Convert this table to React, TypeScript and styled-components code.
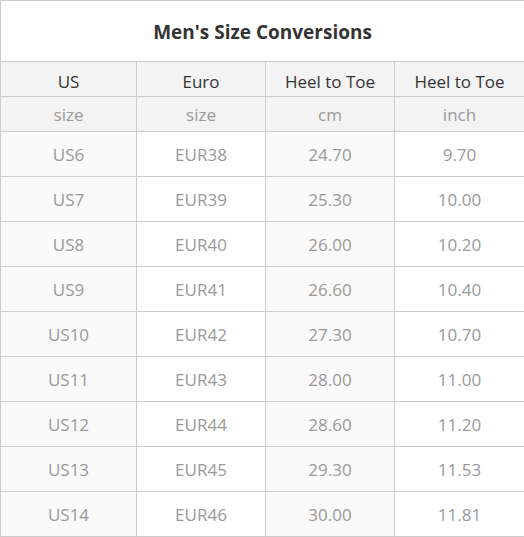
import React from "react";
import styled, { createGlobalStyle } from "styled-components";

const Global = createGlobalStyle`
  html, body { margin: 0; padding: 0; background: #fff; }
  body { font-family: "Open Sans", "Noto Sans", "Liberation Sans", sans-serif; }
`;

const Table = styled.table`
  width: 524px;
  border-collapse: collapse;
  table-layout: fixed;
  border: 1px solid #cccccc;
`;

const Col = styled.col<{ $w: number }>`
  width: ${(p) => p.$w}px;
`;

const TitleCell = styled.th`
  height: 58px;
  padding: 2px 0 0;
  border: 1px solid #cccccc;
  background: #ffffff;
  color: #333333;
  font-size: 19px;
  font-weight: 700;
  text-align: center;
  vertical-align: middle;
`;

const HeadCell = styled.th<{ $sub?: boolean }>`
  height: ${(p) => (p.$sub ? "34px" : "30px")};
  padding: ${(p) => (p.$sub ? "0" : "4px 0 0")};
  border: 1px solid #cccccc;
  background: #f3f3f3;
  color: ${(p) => (p.$sub ? "#9a9a9a" : "#333333")};
  font-size: 17px;
  font-weight: 400;
  text-align: center;
  vertical-align: middle;
  white-space: nowrap;
`;

const Cell = styled.td<{ $shade: boolean }>`
  height: 43px;
  padding: 1px 0 0;
  border: 1px solid #cccccc;
  background: ${(p) => (p.$shade ? "#fafafa" : "#ffffff")};
  color: #999999;
  font-size: 17px;
  text-align: center;
  vertical-align: middle;
`;

const rows = [
  ["US6", "EUR38", "24.70", "9.70"],
  ["US7", "EUR39", "25.30", "10.00"],
  ["US8", "EUR40", "26.00", "10.20"],
  ["US9", "EUR41", "26.60", "10.40"],
  ["US10", "EUR42", "27.30", "10.70"],
  ["US11", "EUR43", "28.00", "11.00"],
  ["US12", "EUR44", "28.60", "11.20"],
  ["US13", "EUR45", "29.30", "11.53"],
  ["US14", "EUR46", "30.00", "11.81"],
];

export default function App() {
  return (
    <>
      <Global />
      <Table>
        <colgroup>
          <Col $w={136} />
          <Col $w={129} />
          <Col $w={129} />
          <Col $w={130} />
        </colgroup>
        <thead>
          <tr>
            <TitleCell colSpan={4}>Men's Size Conversions</TitleCell>
          </tr>
          <tr>
            <HeadCell>US</HeadCell>
            <HeadCell>Euro</HeadCell>
            <HeadCell>Heel to Toe</HeadCell>
            <HeadCell>Heel to Toe</HeadCell>
          </tr>
          <tr>
            <HeadCell $sub>size</HeadCell>
            <HeadCell $sub>size</HeadCell>
            <HeadCell $sub>cm</HeadCell>
            <HeadCell $sub>inch</HeadCell>
          </tr>
        </thead>
        <tbody>
          {rows.map((r) => (
            <tr key={r[0]}>
              {r.map((v, i) => (
                <Cell key={i} $shade={i % 2 === 0}>
                  {v}
                </Cell>
              ))}
            </tr>
          ))}
        </tbody>
      </Table>
    </>
  );
}
